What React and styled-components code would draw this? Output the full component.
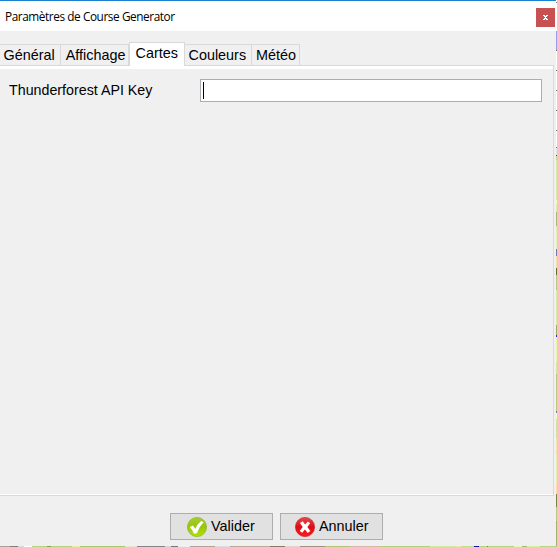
import React from "react";
import styled, { createGlobalStyle } from "styled-components";

const GlobalStyle = createGlobalStyle`
  * { box-sizing: border-box; }
  body { margin: 0; overflow: hidden; font-family: "Liberation Sans", Arial, sans-serif; font-size: 14.25px; color: #000; }
`;

const Desktop = styled.div`
  display: grid;
  grid-template-columns: 556px 1px;
  grid-template-rows: 546px 1px;
  width: 557px;
  height: 547px;
`;

const Dialog = styled.main`
  display: flex;
  flex-direction: column;
  background: #f0f0f0;
  border-top: 1px solid #1a80d2;
  min-width: 0;
`;

const MapRight = styled.div`
  background: linear-gradient(
    #fff 0 2px, #777 2px 3px, #fff 3px 31px, #9b9bea 31px 50px, #777 50px 51px,
    #fff 51px 70px, #777 70px 71px, #fff 71px 90px, #777 90px 91px,
    #fff 91px 110px, #777 110px 111px, #fff 111px 130px, #777 130px 131px,
    #fff 131px 147px, #777 147px 148px, #e4e4e4 148px 155px, #555 155px 156px,
    #c5d98c 156px 160px, #d5eda0 160px 200px, #fff3c0 200px 204px,
    #d9ef9c 204px 212px, #a8b877 212px 226px, #dfeeb0 226px 230px,
    #ffdfb8 230px 232px, #dff3b4 232px 249px, #7777a8 249px 256px,
    #f2dfa8 256px 268px, #666b36 268px 275px, #b8c880 275px 290px,
    #d5eda0 290px 325px, #9eac68 325px 335px, #2929d8 335px 337px,
    #e8f5a8 337px 362px, #d0eb90 362px 374px, #bcc77e 374px 411px,
    #7777d8 411px 413px, #f7f7c8 413px 419px, #cfe29e 419px 438px,
    #f3e4ad 438px 450px, #ffd5b0 450px 454px, #e4f0ac 454px 484px,
    #ffd8b0 484px 494px, #768447 494px 507px, #b9cb82 507px 521px, #a0b36a 521px
  );
`;

const MapBottom = styled.div`
  grid-column: 1 / 3;
  background: linear-gradient(
    90deg, #aaa098 0 10px, #857f79 10px 18px, #ddd7ce 18px 24px, #fff 24px 32px,
    #b6d580 32px 47px, #849e54 47px 51px, #b5d37b 51px 72px, #f0e8a8 72px 80px,
    #a8c76e 80px 125px, #eee0d5 125px 137px, #888386 137px 165px,
    #ddd5cc 165px 171px, #797279 171px 178px, #eee 178px 190px,
    #b8a098 190px 215px, #ddd 215px 230px, #bca894 230px 270px,
    #897967 270px 285px, #e3d2cc 285px 300px, #a78e84 300px 325px,
    #b4c477 325px 350px, #d6b9a8 350px 380px, #b4ce7f 380px 430px,
    #d5e8a0 430px 457px, #f4e5b0 457px 461px, #c5dd92 461px 474px,
    #1111a8 474px 479px, #b6d57e 479px 487px, #a84ac5 487px 488px,
    #b6d57e 488px 514px, #eef3bd 514px 522px, #a4bb73 522px 527px,
    #d7ed9f 527px 540px, #bbd484 540px
  );
`;

const TitleBar = styled.header`
  display: flex;
  align-items: flex-start;
  justify-content: space-between;
  height: 30px;
  padding: 7px 1px 0 5px;
  background: #fff;
`;

const Title = styled.h1`
  margin: 0;
  font: 400 11.8px/16px "Open Sans", "Noto Sans", sans-serif;
  letter-spacing: -0.42px;
  white-space: nowrap;
`;

const CloseButton = styled.button`
  display: grid;
  place-items: center;
  width: 19px;
  height: 19px;
  padding: 0;
  border: 0;
  background: #c75050;
`;

const TabList = styled.nav`
  display: flex;
  align-items: flex-end;
  height: 34px;
`;

const Tab = styled.button`
  width: ${(p) => p.$width}px;
  height: ${(p) => (p.$active ? 24 : 21)}px;
  padding: 0 0 0 ${(p) => p.$inset}px;
  border: solid #d9d9d9;
  border-width: 1px 1px 0 ${(p) => (p.$active ? 1 : 0)}px;
  background: ${(p) => (p.$active ? "#fff" : "#f0f0f0")};
  font: inherit;
  font-size: 14.4px;
  line-height: 21px;
  color: #000;
  white-space: nowrap;
  display: flex;
  justify-content: flex-start;
  margin-bottom: ${(p) => (p.$active ? -1 : 0)}px;
  z-index: ${(p) => (p.$active ? 1 : 0)};
`;

const Panel = styled.section`
  width: 554px;
  height: 431px;
  border: solid #d9d9d9;
  border-width: 1px 1px 1px 0;
  background: linear-gradient(#fff 0 3px, #f0f0f0 3px 428px, #fff 428px);
  padding: 13px 11px 0 9px;
`;

const Field = styled.label`
  display: grid;
  grid-template-columns: 191px 342px;
  height: 23px;
  line-height: 22px;
`;

const Input = styled.div`
  display: flex;
  align-items: center;
  height: 23px;
  padding-left: 2px;
  border: 1px solid #abadb3;
  background: #fff;
`;

const Caret = styled.span`
  width: 1px;
  height: 17px;
  background: #000;
`;

const Actions = styled.footer`
  display: flex;
  gap: 7px;
  padding: 17px 0 0 170px;
`;

const ActionButton = styled.button`
  display: flex;
  align-items: center;
  gap: 4px;
  width: 103px;
  height: 27px;
  padding: 0 0 0 ${(p) => p.$inset}px;
  border: 1px solid #adadad;
  background: #e1e1e1;
  font: inherit;
  font-size: 14.4px;
  line-height: 16px;
  color: #000;
`;

const ActionLabel = styled.span`
  margin-top: -1px;
`;

const tabs = [
  { label: "Général", width: 61, inset: 3.5 },
  { label: "Affichage", width: 68, inset: 4.7 },
  { label: "Cartes", width: 56, inset: 5.5, active: true },
  { label: "Couleurs", width: 67, inset: 3.5 },
  { label: "Météo", width: 48, inset: 4 },
];

function CheckIcon() {
  return (
    <svg width="20" height="20" viewBox="0 0 20 20">
      <defs>
        <linearGradient id="green" x2="0" y2="1">
          <stop stopColor="#a6cb32" />
          <stop offset=".5" stopColor="#98c60a" />
          <stop offset="1" stopColor="#b0e400" />
        </linearGradient>
      </defs>
      <circle cx="10" cy="10" r="9.6" fill="url(#green)" stroke="#91b51c" strokeWidth=".7" />
      <path d="M2.6 10.2 5.8 8.4Q7.2 9.8 8.2 12 10.3 7 14.2 4L16.6 5.3Q12.2 9.5 9.9 16.3L7 16.7Q5.6 12.6 2.6 10.2Z" fill="#fff" />
    </svg>
  );
}

function CrossIcon() {
  return (
    <svg width="20" height="20" viewBox="0 0 20 20">
      <defs>
        <linearGradient id="red" x2="0" y2="1">
          <stop stopColor="#e64a4e" />
          <stop offset=".5" stopColor="#e00b12" />
          <stop offset="1" stopColor="#ff1a20" />
        </linearGradient>
      </defs>
      <circle cx="10" cy="10" r="9.6" fill="url(#red)" stroke="#c92027" strokeWidth=".7" />
      <path d="M4.9 5.9 7.7 4.3 10.2 7.4 12.8 4.5 15.2 6.3 12.4 10 15.3 14 12.7 15.9 9.9 12.6 7.3 15.8 4.7 13.9 7.7 10Z" fill="#fff" />
    </svg>
  );
}

function CloseIcon() {
  return (
    <svg width="5" height="5" viewBox="0 0 5 5" shapeRendering="crispEdges">
      <path d="M0 0h2v1h1V0h2v1H4v1H3v1h1v1h1v1H3V4H2v1H0V4h1V3h1V2H1V1H0Z" fill="#fff" />
    </svg>
  );
}

export default function App() {
  return (
    <>
      <GlobalStyle />
      <Desktop>
        <Dialog>
          <TitleBar>
            <Title>Paramètres de Course Generator</Title>
            <CloseButton aria-label="Fermer"><CloseIcon /></CloseButton>
          </TitleBar>
          <TabList>
            {tabs.map((t) => (
              <Tab key={t.label} $width={t.width} $inset={t.inset} $active={t.active}>{t.label}</Tab>
            ))}
          </TabList>
          <Panel>
            <Field>
              <span>Thunderforest API Key</span>
              <Input><Caret /></Input>
            </Field>
          </Panel>
          <Actions>
            <ActionButton $inset={16}><CheckIcon /><ActionLabel>Valider</ActionLabel></ActionButton>
            <ActionButton $inset={14}><CrossIcon /><ActionLabel>Annuler</ActionLabel></ActionButton>
          </Actions>
        </Dialog>
        <MapRight />
        <MapBottom />
      </Desktop>
    </>
  );
}
